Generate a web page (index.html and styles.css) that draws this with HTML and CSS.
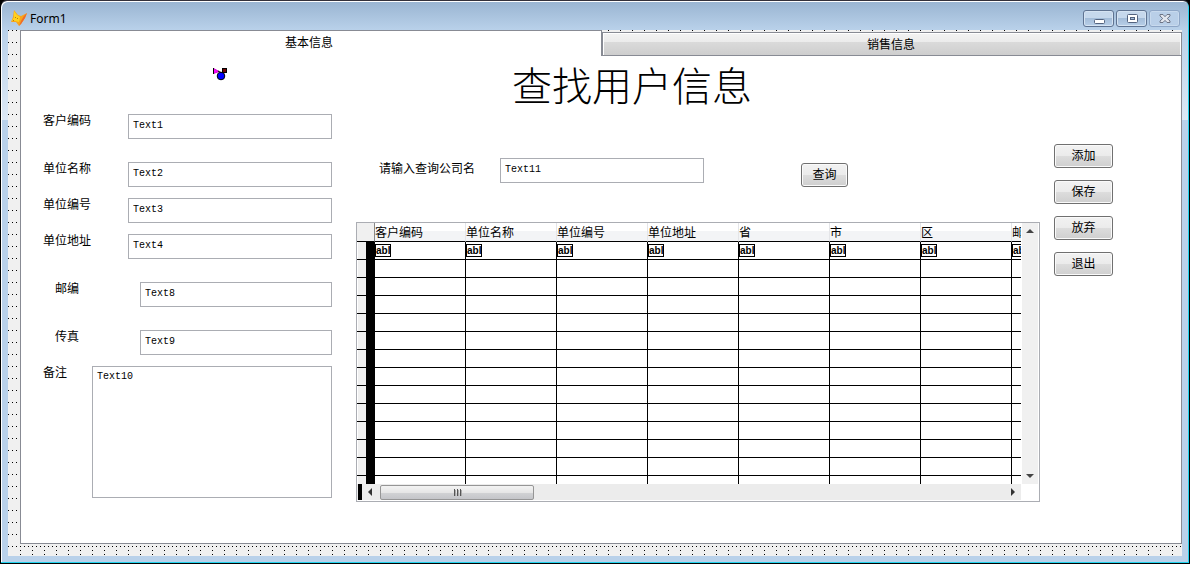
FILE: index.html
```html
<!DOCTYPE html>
<html lang="zh-CN">
<head>
<meta charset="utf-8">
<title>Form1</title>
<link rel="stylesheet" href="styles.css">
</head>
<body>
<div class="window">
  <header class="titlebar">
    <svg class="app-icon" width="16" height="16" viewBox="0 0 16 16" aria-hidden="true">
      <path d="M3 0 L7 5 L10 6 L16 3 L14 8 L10 14 L8 16 L5 12 L0 12 L2 7 Z" fill="#f9a51a"/>
      <path d="M3 1 L6 5 L9 7 L8 12 L4 11 L1 11 L3 7 Z" fill="#ffd21c"/>
      <path d="M16 3 L14 8 L10 14 L8 16 L10 11 L13 6 Z" fill="#ee6a2c"/>
      <path d="M4 7h1v1H4zM6 8h1v1H6zM2 10h1v1H2z" fill="#b8791a"/>
    </svg>
    <h1 class="caption">Form1</h1>
    <div class="window-buttons">
      <button class="winbtn" aria-label="最小化"><svg width="12" height="12" viewBox="0 0 12 12"><rect x="1.5" y="6.500" width="10" height="4" rx="1" fill="#fff" stroke="#53637f"/></svg></button>
      <button class="winbtn" aria-label="最大化"><svg width="12" height="12" viewBox="0 0 12 12"><rect x="1.5" y="1.500" width="10" height="8" rx="1" fill="#fff" stroke="#53637f"/><rect x="4.500" y="4.500" width="4" height="2" fill="#a9bfdc" stroke="#53637f"/></svg></button>
      <button class="winbtn winbtn-off" aria-label="关闭"><svg width="12" height="12" viewBox="0 0 12 12"><path d="M1 1.500H4L6 3.700L8 1.500H11V3L8.300 5.500L11 8V9.500H8L6 7.400L4 9.500H1V8L3.700 5.500L1 3Z" fill="#e2e6ee" stroke="#6c7486"/></svg></button>
    </div>
  </header>

  <main class="client">
    <div class="pageframe">
      <div class="tabs" role="tablist">
        <button class="tab tab-active" role="tab" aria-selected="true">基本信息</button>
        <button class="tab" role="tab" aria-selected="false">销售信息</button>
      </div>

      <section class="page" role="tabpanel">
        <form class="details">
          <svg class="env-icon" width="16" height="14" viewBox="0 0 16 14" aria-hidden="true">
            <path d="M1.500 1.500L7 4.500L1.500 6.500Z" fill="#f0f" stroke="#d000d0"/>
            <path d="M1.500 1V7M6 4L10 6" stroke="#000" fill="none"/>
            <circle cx="9" cy="9" r="3.800" fill="#00f" stroke="#000"/>
            <rect x="10.500" y="1.500" width="4" height="4" fill="#700000" stroke="#000"/>
          </svg>
          <div class="field"><label for="t1">客户编码</label><input id="t1" value="Text1"></div>
          <div class="field spaced"><label for="t2">单位名称</label><input id="t2" value="Text2"></div>
          <div class="field"><label for="t3">单位编号</label><input id="t3" value="Text3"></div>
          <div class="field"><label for="t4">单位地址</label><input id="t4" value="Text4"></div>
          <div class="field spaced indent"><label for="t8">邮编</label><input id="t8" value="Text8"></div>
          <div class="field spaced indent"><label for="t9">传真</label><input id="t9" value="Text9"></div>
          <div class="field memo"><label for="t10">备注</label><textarea id="t10">Text10</textarea></div>
        </form>

        <div class="lookup">
          <h2 class="heading">查找用户信息</h2>
          <form class="search">
            <label for="t11">请输入查询公司名</label>
            <input id="t11" value="Text11">
            <button type="button" class="btn">查询</button>
          </form>

          <div class="grid">
            <div class="grid-view">
              <table>
                <colgroup><col class="col-mark"><col class="col"><col class="col"><col class="col"><col class="col"><col class="col"><col class="col"><col class="col"><col></colgroup>
                <thead><tr><th class="corner"></th><th>客户编码</th><th>单位名称</th><th>单位编号</th><th>单位地址</th><th>省</th><th>市</th><th>区</th><th>邮</th></tr></thead>
                <tbody>
                  <tr><td></td><td><span class="abl">abl</span></td><td><span class="abl">abl</span></td><td><span class="abl">abl</span></td><td><span class="abl">abl</span></td><td><span class="abl">abl</span></td><td><span class="abl">abl</span></td><td><span class="abl">abl</span></td><td><span class="abl">abl</span></td></tr>
                  <tr><td></td><td></td><td></td><td></td><td></td><td></td><td></td><td></td><td></td></tr>
                  <tr><td></td><td></td><td></td><td></td><td></td><td></td><td></td><td></td><td></td></tr>
                  <tr><td></td><td></td><td></td><td></td><td></td><td></td><td></td><td></td><td></td></tr>
                  <tr><td></td><td></td><td></td><td></td><td></td><td></td><td></td><td></td><td></td></tr>
                  <tr><td></td><td></td><td></td><td></td><td></td><td></td><td></td><td></td><td></td></tr>
                  <tr><td></td><td></td><td></td><td></td><td></td><td></td><td></td><td></td><td></td></tr>
                  <tr><td></td><td></td><td></td><td></td><td></td><td></td><td></td><td></td><td></td></tr>
                  <tr><td></td><td></td><td></td><td></td><td></td><td></td><td></td><td></td><td></td></tr>
                  <tr><td></td><td></td><td></td><td></td><td></td><td></td><td></td><td></td><td></td></tr>
                  <tr><td></td><td></td><td></td><td></td><td></td><td></td><td></td><td></td><td></td></tr>
                  <tr><td></td><td></td><td></td><td></td><td></td><td></td><td></td><td></td><td></td></tr>
                  <tr><td></td><td></td><td></td><td></td><td></td><td></td><td></td><td></td><td></td></tr>
                  <tr><td></td><td></td><td></td><td></td><td></td><td></td><td></td><td></td><td></td></tr>
                </tbody>
              </table>
            </div>
            <div class="vscroll">
              <button class="arrow" aria-label="向上"><svg width="8" height="4" viewBox="0 0 8 4"><path d="M0 4L4 0L8 4Z" fill="#444"/></svg></button>
              <button class="arrow" aria-label="向下"><svg width="8" height="4" viewBox="0 0 8 4"><path d="M0 0L4 4L8 0Z" fill="#444"/></svg></button>
            </div>
            <div class="hscroll">
              <span class="splitter"></span>
              <button class="arrow" aria-label="向左"><svg width="4" height="8" viewBox="0 0 4 8"><path d="M4 0L0 4L4 8Z" fill="#333"/></svg></button>
              <button class="thumb" aria-label="滚动块"><svg width="9" height="7" viewBox="0 0 9 7"><path d="M1.500 0V7M4.500 0V7M7.500 0V7" stroke="#555" stroke-width="1"/><path d="M2.500 1V7M5.500 1V7M8.500 1V7" stroke="#aaa" stroke-width="1"/></svg></button>
              <button class="arrow" aria-label="向右"><svg width="4" height="8" viewBox="0 0 4 8"><path d="M0 0L4 4L0 8Z" fill="#333"/></svg></button>
            </div>
          </div>
        </div>

        <div class="actions">
          <button class="btn">添加</button>
          <button class="btn">保存</button>
          <button class="btn">放弃</button>
          <button class="btn">退出</button>
        </div>
      </section>
    </div>
  </main>
</div>
</body>
</html>
```
FILE: styles.css
```css
* { box-sizing: border-box; }

body {
  margin: 0;
  background: #000;
  color: #000;
  font: 12px/12px "Noto Sans CJK SC", sans-serif;
}

button, input, textarea { font: inherit; color: inherit; margin: 0; padding: 0; }
svg { display: block; }

/* Window frame */
.window {
  display: flex;
  flex-direction: column;
  min-height: 100vh;
  padding: 0 7px 7px;
  border: 1px solid #000;
  border-top-color: #33303a;
  border-radius: 7px 7px 0 0;
  background: linear-gradient(#99b4d1 0, #b9d1ea 29px, #b9d1ea 29px, #dde9f6 119px, #b9d1ea 119px);
  box-shadow: inset -1px -1px 0 #22d3ee, inset 1px 1px 0 #fff;
}

.titlebar { display: flex; height: 29px; }
.app-icon { margin: 9px 3px 0 3px; }
.caption {
  flex: 1;
  margin: 10px 0 0;
  font: 12px/16px "Noto Sans", sans-serif;
}
.window-buttons { display: flex; gap: 2px; margin: 9px 2px 0 0; }
.winbtn {
  display: flex;
  align-items: center;
  justify-content: center;
  width: 31px;
  height: 17px;
  border: 1px solid #5f7391;
  border-radius: 3px;
  background: linear-gradient(#c6d8ec 50%, #a4bdd9 50%, #b8cfe8);
  box-shadow: inset 0 0 0 1px #d5e3f2;
}
.winbtn-off { border-color: #8ea6c6; background: #b9cfe8; box-shadow: inset 0 0 0 1px #c8daee; }

/* Form surface with design-time dots */
.client {
  flex: 1;
  display: flex;
  padding-left: 12px;
  background: conic-gradient(at 1px 1px, transparent 75%, #000 0) 0 0 / 4px 12px #f0f0f0;
}
.pageframe {
  flex: 1;
  min-width: 0;
  display: flex;
  flex-direction: column;
  padding-bottom: 12px;
  background: conic-gradient(at 1px 1px, transparent 75%, #000 0) 0 0 / 12px 4px;
}

.tabs {
  display: flex;
  align-items: flex-end;
  background: conic-gradient(at 1px 1px, transparent 75%, #000 0) 0 0 / 12px 4px #f0f0f0;
}
.tab {
  flex: 1 1 0;
  height: 24px;
  padding-right: 2px;
  border: 1px solid #888b94;
  background: linear-gradient(#f3f3f3, #ebebeb 42%, #dadada 42%, #cecece);
  box-shadow: inset 1px 1px 0 #fff, inset -1px 0 0 #fff;
}
.tab-active {
  flex-basis: 4px;
  height: 26px;
  padding: 0 4px 4px 0;
  border-bottom: 0;
  background: #fff;
  box-shadow: none;
}

.page {
  flex: 1;
  display: grid;
  grid-template-columns: 289px minmax(0, 1fr) 59px;
  column-gap: 14px;
  align-items: start;
  padding: 0 68px 40px 22px;
  border: 1px solid #888b94;
  border-top: 0;
  background: #fff;
}

/* Record fields */
.env-icon { margin: 11px 0 33px 169px; }
.field { display: flex; align-items: flex-start; margin-top: 11px; }
.field label { width: 85px; }
.env-icon + .field { margin-top: 0; }
.spaced { margin-top: 23px; }
.indent { padding-left: 12px; }
.memo label { width: 49px; }

input, textarea {
  flex: 1;
  min-width: 0;
  height: 25px;
  padding: 0 4px 3px;
  border: 1px solid #abadb3;
  border-radius: 0;
  background: #fff;
  font: 10px/12px "Liberation Mono", monospace;
}
textarea { height: 132px; padding-top: 4px; resize: none; }

.btn {
  height: 24px;
  padding-bottom: 2px;
  border: 1px solid #707070;
  border-radius: 3px;
  background: linear-gradient(#f2f2f2, #ebebeb 50%, #dddddd 50%, #cfcfcf);
  box-shadow: inset 0 0 0 1px #fafafa;
}

/* Lookup */
.lookup { padding-left: 10px; }
.heading {
  margin: 8px 0 54px 156px;
  font-size: 40px;
  line-height: 40px;
  font-weight: 300;
}
.search { display: flex; align-items: flex-start; margin-left: 23px; height: 64px; }
.search label { width: 121px; padding-top: 4px; }
.search input { flex: 0 0 204px; }
.search .btn { width: 47px; margin: 5px 0 0 97px; }

/* Data grid */
.grid {
  display: grid;
  grid-template-columns: minmax(0, 1fr) 18px;
  border: 1px solid #abadb3;
}
.grid-view { height: 261px; overflow: hidden; }
table { width: 100%; table-layout: fixed; border-collapse: separate; border-spacing: 0; }
.col-mark { width: 18px; }
.col { width: 91px; }
th, td {
  height: 18px;
  padding: 0;
  border: solid #000;
  border-width: 0 1px 1px 0;
  line-height: 12px;
  text-align: left;
  white-space: nowrap;
  overflow: hidden;
}
th {
  height: 19px;
  border-right-color: #e4e5e8;
  background: linear-gradient(#fff 45%, #f3f4f6 45%, #f3f4f6);
  font-weight: 400;
}
th:last-child, td:last-child { border-right: 0; }
th.corner { border-right-color: #888; background: #f0f0f0; }
td:first-child { background: linear-gradient(90deg, #fff 1px, #f0f0f0 1px, #f0f0f0 9px, #000 9px); }
.abl {
  display: block;
  width: 16px;
  height: 13px;
  border: 1px solid #000;
  font: bold 10px/11px "Liberation Sans", sans-serif;
  text-align: center;
}

.arrow { display: flex; align-items: center; justify-content: center; width: 16px; height: 16px; border: 0; background: none; }
.vscroll {
  display: flex;
  flex-direction: column;
  justify-content: space-between;
  margin: 0 1px;
  background: #f0f0f0;
}
.hscroll { display: flex; height: 16px; margin-bottom: 1px; background: #ececec; }
.hscroll .arrow:last-child { margin-left: auto; }
.splitter { width: 4px; margin-left: 1px; background: #000; }
.thumb {
  display: flex;
  align-items: center;
  justify-content: center;
  width: 154px;
  height: 15px;
  margin: 1px 0 0 2px;
  border: 1px solid #959595;
  border-radius: 2px;
  background: linear-gradient(#f3f3f3, #e6e6e6 50%, #d2d3d5 50%, #c4c5c9);
}

.actions { display: flex; flex-direction: column; gap: 12px; padding-top: 88px; }
```
